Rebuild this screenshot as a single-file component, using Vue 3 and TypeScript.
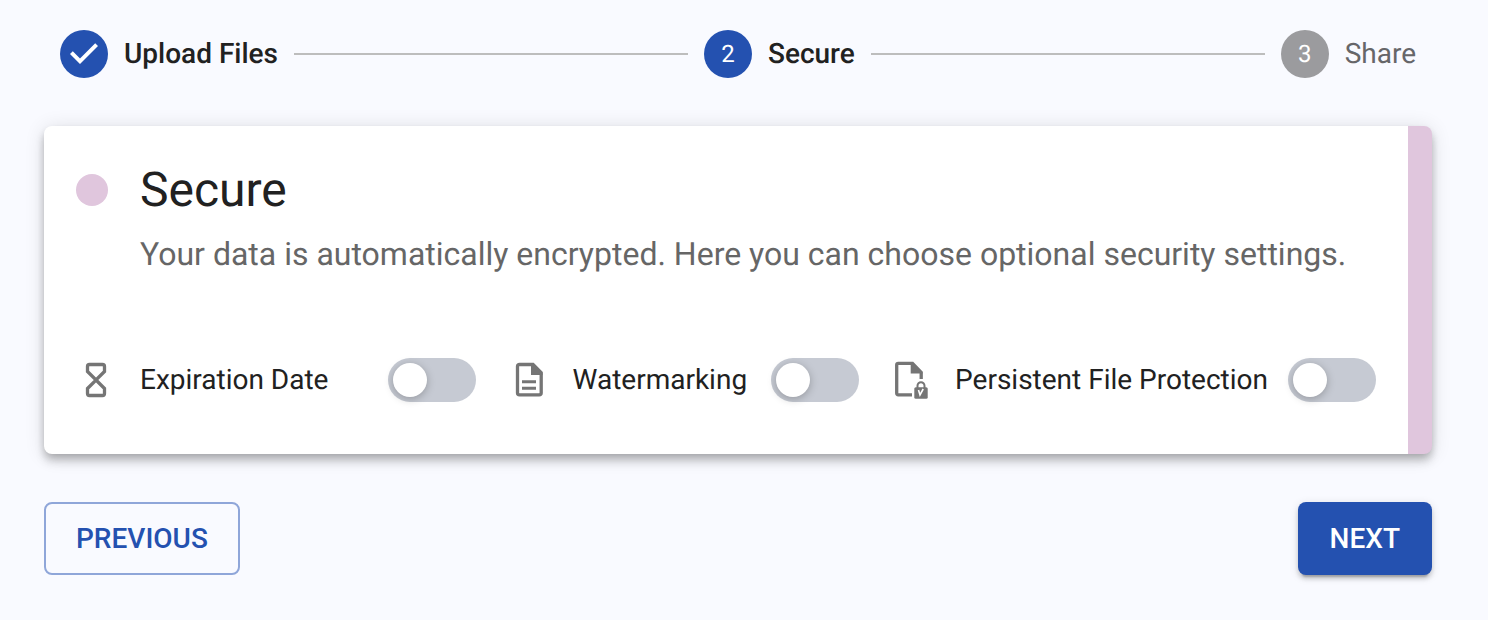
<script setup lang="ts">
import { reactive } from 'vue'

type StepState = 'done' | 'active' | 'pending'

interface Step {
  label: string
  state: StepState
}

interface Setting {
  id: string
  label: string
  icon: 'hourglass' | 'document' | 'protected'
  enabled: boolean
}

const steps: Step[] = [
  { label: 'Upload Files', state: 'done' },
  { label: 'Secure', state: 'active' },
  { label: 'Share', state: 'pending' },
]

const settings = reactive<Setting[]>([
  { id: 'expiration', label: 'Expiration Date', icon: 'hourglass', enabled: false },
  { id: 'watermarking', label: 'Watermarking', icon: 'document', enabled: false },
  { id: 'protection', label: 'Persistent File Protection', icon: 'protected', enabled: false },
])
</script>

<template>
  <main class="page">
    <ol class="stepper">
      <template v-for="(step, index) in steps" :key="step.label">
        <li v-if="index > 0" class="connector" role="presentation"></li>
        <li
          class="step"
          :class="step.state"
          :aria-current="step.state === 'active' ? 'step' : undefined"
        >
          <span class="marker">
            <svg v-if="step.state === 'done'" class="check" viewBox="0 0 24 24" aria-hidden="true">
              <path d="M10 17l-5-5 1.400-1.400 3.600 3.600 7.600-7.600L19 8z" />
            </svg>
            <template v-else>{{ index + 1 }}</template>
          </span>
          <span class="step-label">{{ step.label }}</span>
        </li>
      </template>
    </ol>

    <section class="card">
      <header class="intro">
        <span class="dot"></span>
        <h1 class="title">Secure</h1>
        <p class="subtitle">
          Your data is automatically encrypted. Here you can choose optional security settings.
        </p>
      </header>

      <div class="settings">
        <div v-for="setting in settings" :key="setting.id" class="setting" :class="setting.id">
          <svg class="icon" viewBox="0 0 40 40" aria-hidden="true">
            <g v-if="setting.icon === 'hourglass'" class="line">
              <path d="M11.500 6.500q0-2 2-2h13q2 0 2 2v5L20 20l-8.500-8.500zM20 20l8.500 8.500v5q0 2-2 2h-13q-2 0-2-2v-5z" />
            </g>
            <g v-else-if="setting.icon === 'document'">
              <path class="line" d="M10.500 4.500H24l8.200 8.200V33q0 1.800-2 1.800H10.500q-2 0-2-1.800V6.300q0-1.800 2-1.800z" />
              <path class="solid" d="M22 4h3l8.500 9v2H22z" />
              <path class="solid" d="M13 20.300h14v3H13zM13 26.700h14v3H13z" />
            </g>
            <g v-else>
              <path class="line" d="M21 34.800H7.200q-1.500 0-1.500-1.500V4.800q0-1.500 1.500-1.500h14.300l8.700 9V19" />
              <path class="solid" d="M19.700 3h2.500L31.500 12.500v1H19.700z" />
              <path class="shackle" d="M26.500 28v-2.300a3.500 3.500 0 0 1 7 0V28" />
              <rect class="solid" x="23.300" y="27.300" width="13.400" height="11.400" rx="1.500" />
              <path class="slash" d="M27.500 30 29 35l3.200-6" />
            </g>
          </svg>
          <label class="setting-label" :for="setting.id">{{ setting.label }}</label>
          <input :id="setting.id" v-model="setting.enabled" class="switch" type="checkbox" role="switch" />
        </div>
      </div>
    </section>

    <footer class="actions">
      <button type="button" class="button outlined">PREVIOUS</button>
      <button type="button" class="button filled">NEXT</button>
    </footer>
  </main>
</template>

<style>
body {
  margin: 0;
  background: #f9faff;
}
</style>

<style scoped>
.page {
  box-sizing: border-box;
  padding: 30px 56px 44px 44px;
  font-family: Roboto, sans-serif;
  font-size: 28px;
  color: #212121;
  text-rendering: geometricPrecision;
}

.stepper {
  display: flex;
  align-items: center;
  gap: 16px;
  margin: 0 0 48px;
  padding: 0 16px;
  list-style: none;
}

.step {
  display: flex;
  align-items: center;
  gap: 16px;
}

.connector {
  flex: 1;
  height: 2px;
  background: #bdbdbd;
}

.marker {
  display: flex;
  align-items: center;
  justify-content: center;
  width: 48px;
  height: 48px;
  border-radius: 50%;
  background: #2451b0;
  color: #fff;
  font-size: 24px;
}

.check {
  width: 48px;
  height: 48px;
  fill: #fff;
}

.step-label {
  font-weight: 500;
  line-height: 40px;
}

.pending .marker {
  background: #9b9b9e;
}

.pending .step-label {
  font-weight: 400;
  color: #666669;
}

.card {
  padding: 32px;
  padding-bottom: 52px;
  border-right: 24px solid #e0c6dd;
  border-radius: 8px;
  background: #fff;
  box-shadow:
    0 4px 8px -2px rgba(0, 0, 0, 0.2),
    0 8px 10px rgba(0, 0, 0, 0.14),
    0 2px 20px rgba(0, 0, 0, 0.12);
}

.intro {
  display: grid;
  grid-template-columns: 32px 1fr;
  column-gap: 32px;
  align-items: center;
}

.dot {
  width: 32px;
  height: 32px;
  border-radius: 50%;
  background: #e0c6dd;
}

.title {
  margin: 0;
  font-size: 48px;
  font-weight: 400;
  line-height: 64px;
}

.subtitle {
  grid-column: 2;
  margin: 0;
  font-size: 32px;
  line-height: 64px;
  color: #666;
}

.settings {
  display: flex;
  justify-content: space-between;
  margin-top: 72px;
}

.setting {
  display: flex;
  align-items: center;
}

.expiration {
  min-width: 400px;
}

.watermarking {
  min-width: 350px;
}

.icon {
  flex: none;
  width: 40px;
  height: 40px;
  margin-right: 24px;
}

.line {
  fill: none;
  stroke: #757575;
  stroke-width: 3.3;
}

.solid {
  fill: #757575;
}

.shackle {
  fill: none;
  stroke: #757575;
  stroke-width: 2;
}

.slash {
  fill: none;
  stroke: #fff;
  stroke-width: 1.6;
}

.setting-label {
  flex: 1;
  margin-right: 20px;
  line-height: 44px;
  white-space: nowrap;
}

.switch {
  appearance: none;
  box-sizing: border-box;
  flex: none;
  width: 88px;
  height: 44px;
  margin: 0;
  padding: 5px;
  border-radius: 22px;
  background: #c6cad3;
  cursor: pointer;
}

.switch::before {
  content: '';
  display: block;
  width: 34px;
  height: 34px;
  border-radius: 50%;
  background: #fff;
  box-shadow: 0 2px 8px rgba(0, 0, 0, 0.25);
}

.switch:checked {
  background: #2451b0;
}

.switch:checked::before {
  margin-left: auto;
}

.actions {
  display: flex;
  justify-content: space-between;
  margin-top: 48px;
}

.button {
  padding: 12px 32px;
  border: 0;
  border-radius: 8px;
  font-family: inherit;
  font-size: 28px;
  font-weight: 500;
  line-height: 49px;
  cursor: pointer;
}

.outlined {
  padding: 10px 30px;
  border: 2px solid #8fa6d9;
  background: transparent;
  color: #2451b0;
}

.filled {
  background: #2451b0;
  color: #fff;
  box-shadow:
    0 6px 2px -4px rgba(0, 0, 0, 0.2),
    0 4px 4px rgba(0, 0, 0, 0.14),
    0 2px 10px rgba(0, 0, 0, 0.12);
}
</style>
